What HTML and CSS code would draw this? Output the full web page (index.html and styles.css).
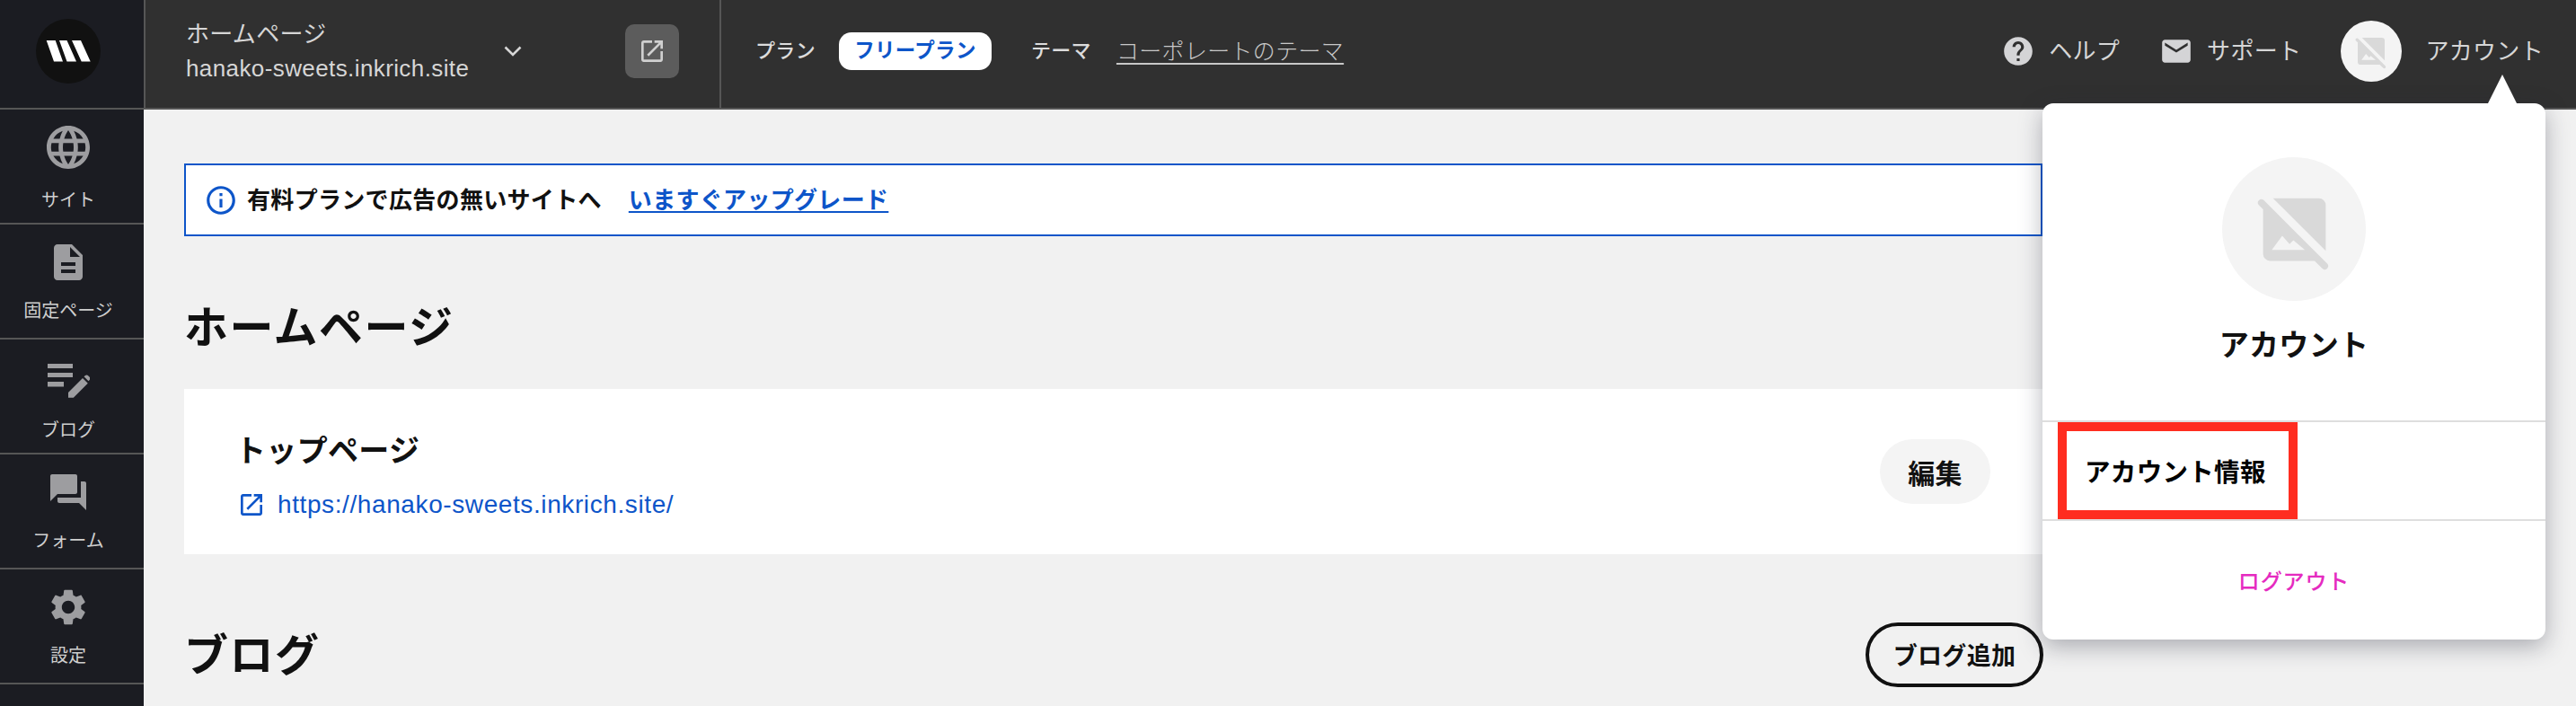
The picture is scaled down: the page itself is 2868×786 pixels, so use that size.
FILE: index.html
```html
<!DOCTYPE html>
<html lang="ja">
<head>
<meta charset="utf-8">
<title>ホームページ</title>
<link rel="stylesheet" href="styles.css">
</head>
<body>
<div class="app">
  <div class="brand">
    <span class="logo">
      <svg viewBox="0 0 72 72" width="72" height="72"><path class="logo-w" d="M11.700 24h10L30 47.500H20zM26 24h8.500L45 47.500H34.500zM40 24h10l10.700 23.500h-10z"/></svg>
    </span>
  </div>
  <header class="topbar">
    <div class="site-block">
      <div class="site-names">
        <div class="site-title">ホームページ</div>
        <div class="site-url">hanako-sweets.inkrich.site</div>
      </div>
      <svg class="chevron" viewBox="0 0 20 12" width="20" height="12"><path d="M1.500 1.500 10 10l8.500-8.500"/></svg>
      <span class="open-btn">
        <svg viewBox="0 0 24 24" width="32" height="32"><path d="M19 19H5V5h7V3H5c-1.110 0-2 .9-2 2v14c0 1.100.89 2 2 2h14c1.100 0 2-.9 2-2v-7h-2v7zM14 3v2h3.590l-9.830 9.830 1.410 1.410L19 6.410V10h2V3h-7z"/></svg>
      </span>
    </div>
    <div class="plan-block">
      <span class="plan-label">プラン</span>
      <span class="plan-pill">フリープラン</span>
      <span class="plan-label theme-label">テーマ</span>
      <a class="theme-link">コーポレートのテーマ</a>
    </div>
    <div class="top-actions">
      <span class="top-action">
        <svg viewBox="0 0 24 24" width="38" height="38"><path d="M12 2C6.480 2 2 6.480 2 12s4.480 10 10 10 10-4.480 10-10S17.520 2 12 2zm1 17h-2v-2h2v2zm2.070-7.750l-.9.920C13.450 12.900 13 13.500 13 15h-2v-.5c0-1.100.45-2.100 1.170-2.830l1.240-1.260c.37-.36.59-.86.59-1.410 0-1.100-.9-2-2-2s-2 .9-2 2H8c0-2.210 1.790-4 4-4s4 1.790 4 4c0 .88-.36 1.680-.93 2.250z"/></svg>
        ヘルプ
      </span>
      <span class="top-action">
        <svg viewBox="0 0 24 24" width="38" height="38"><path d="M20 4H4c-1.100 0-1.990.9-1.990 2L2 18c0 1.100.9 2 2 2h16c1.100 0 2-.9 2-2V6c0-1.100-.9-2-2-2zm0 4l-8 5-8-5V6l8 5 8-5v2z"/></svg>
        サポート
      </span>
      <span class="top-account">
        <span class="avatar avatar-small">
          <svg viewBox="0 0 24 24" width="40" height="40"><path fill-rule="evenodd" d="M21 18.150 5.850 3H19a2 2 0 0 1 2 2zM19.100 22.300 17.800 21H5a2 2 0 0 1-2-2V6.200L1.700 4.900a1 1 0 0 1 1.400-1.400l18.400 18.400a1 1 0 0 1-1.400 1.400zM5.500 17.900h9.500l-3.300-2.800-1.100 1.100-2.100-2.400z"/></svg>
        </span>
        アカウント
      </span>
    </div>
  </header>
  <nav class="side">
    <a class="side-item">
      <svg viewBox="2 2 20 20" width="48" height="48"><path d="M11.990 2C6.470 2 2 6.480 2 12s4.470 10 9.990 10C17.520 22 22 17.520 22 12S17.520 2 11.990 2zm6.930 6h-2.950c-.32-1.250-.78-2.450-1.380-3.560 1.840.63 3.370 1.910 4.330 3.560zM12 4.040c.83 1.200 1.480 2.530 1.910 3.960h-3.820c.43-1.430 1.080-2.760 1.910-3.960zM4.260 14C4.100 13.360 4 12.690 4 12s.1-1.360.26-2h3.380c-.08.66-.14 1.320-.14 2 0 .68.06 1.340.14 2H4.260zm.82 2h2.950c.32 1.250.78 2.450 1.380 3.560-1.840-.63-3.370-1.900-4.330-3.560zm2.950-8H5.080c.96-1.660 2.490-2.930 4.330-3.560C8.810 5.550 8.350 6.750 8.030 8zM12 19.960c-.83-1.200-1.480-2.530-1.910-3.960h3.820c-.43 1.430-1.080 2.760-1.910 3.960zM14.340 14H9.660c-.09-.66-.16-1.320-.16-2 0-.68.07-1.350.16-2h4.680c.09.65.16 1.320.16 2 0 .68-.07 1.340-.16 2zm.25 5.560c.6-1.110 1.060-2.310 1.380-3.560h2.950c-.96 1.650-2.490 2.930-4.330 3.560zM16.360 14c.08-.66.14-1.320.14-2 0-.68-.06-1.340-.14-2h3.380c.16.64.26 1.310.26 2s-.1 1.360-.26 2h-3.380z"/></svg>
      <span class="side-label side-label-low">サイト</span>
    </a>
    <a class="side-item">
      <svg viewBox="0 0 24 24" width="48" height="48"><path d="M14 2H6c-1.100 0-1.990.9-1.990 2L4 20c0 1.100.89 2 1.990 2H18c1.100 0 2-.9 2-2V8l-6-6zm2 16H8v-2h8v2zm0-4H8v-2h8v2zm-3-5V3.500L18.500 9H13z"/></svg>
      <span class="side-label">固定ページ</span>
    </a>
    <a class="side-item">
      <svg viewBox="0 0 48 48" width="48" height="48"><path d="M1 9h28v5H1zM1 19h28v5H1zM1 29h18v5.500H1zM24 46.700V41l16-16 5.800 5.800-16 15.900zM41.500 23.300l1.500-1.300c1-.8 2-.8 2.900 0l2 2c.8.9.8 1.900 0 2.800l-1.400 1.400z"/></svg>
      <span class="side-label side-label-low">ブログ</span>
    </a>
    <a class="side-item">
      <svg viewBox="0 0 24 24" width="48" height="48"><path d="M21 6h-2v9H6v2c0 .55.45 1 1 1h11l4 4V7c0-.55-.45-1-1-1zm-4 6V3c0-.55-.45-1-1-1H3c-.55 0-1 .45-1 1v14l4-4h10c.55 0 1-.45 1-1z"/></svg>
      <span class="side-label">フォーム</span>
    </a>
    <a class="side-item">
      <svg viewBox="0 0 24 24" width="48" height="48"><path d="M19.140 12.940c.04-.3.06-.61.06-.94 0-.32-.02-.64-.07-.94l2.030-1.580c.18-.14.23-.41.12-.61l-1.920-3.320c-.12-.22-.37-.29-.59-.22l-2.390.96c-.5-.38-1.030-.7-1.620-.94l-.36-2.540c-.04-.24-.24-.41-.48-.41h-3.840c-.24 0-.43.17-.47.41l-.36 2.540c-.59.24-1.130.57-1.620.94l-2.390-.96c-.22-.08-.47 0-.59.22L2.740 8.870c-.12.21-.08.47.12.61l2.030 1.580c-.05.3-.09.63-.09.94s.02.64.07.94l-2.030 1.580c-.18.14-.23.41-.12.61l1.920 3.320c.12.22.37.29.59.22l2.390-.96c.5.38 1.030.7 1.620.94l.36 2.540c.05.24.24.41.48.41h3.840c.24 0 .44-.17.47-.41l.36-2.540c.59-.24 1.130-.56 1.620-.94l2.390.96c.22.08.47 0 .59-.22l1.920-3.320c.12-.22.07-.47-.12-.61l-2.010-1.580zM12 15.600c-1.980 0-3.600-1.620-3.600-3.600s1.620-3.600 3.600-3.600 3.600 1.620 3.600 3.600-1.620 3.600-3.600 3.600z"/></svg>
      <span class="side-label">設定</span>
    </a>
  </nav>
  <main class="main">
    <div class="notice">
      <svg viewBox="0 0 24 24" width="38" height="38"><path d="M11 7h2v2h-2zm0 4h2v6h-2zm1-9C6.480 2 2 6.480 2 12s4.480 10 10 10 10-4.480 10-10S17.520 2 12 2zm0 18c-4.410 0-8-3.590-8-8s3.590-8 8-8 8 3.590 8 8-3.590 8-8 8z"/></svg>
      <span class="notice-text">有料プランで広告の無いサイトへ</span>
      <a class="notice-link">いますぐアップグレード</a>
    </div>
    <h1 class="section-title section-first">ホームページ</h1>
    <section class="page-card">
      <div class="page-info">
        <h2 class="page-title">トップページ</h2>
        <a class="page-url">
          <svg viewBox="0 0 24 24" width="32" height="32"><path d="M19 19H5V5h7V3H5c-1.110 0-2 .9-2 2v14c0 1.100.89 2 2 2h14c1.100 0 2-.9 2-2v-7h-2v7zM14 3v2h3.590l-9.830 9.830 1.410 1.410L19 6.410V10h2V3h-7z"/></svg>
          https://hanako-sweets.inkrich.site/
        </a>
      </div>
      <span class="edit-btn">編集</span>
    </section>
    <div class="section-row">
      <h1 class="section-title section-blog">ブログ</h1>
      <span class="add-btn">ブログ追加</span>
    </div>
  </main>
  <aside class="popup">
    <div class="popup-head">
      <span class="avatar avatar-large">
        <svg viewBox="0 0 24 24" width="93" height="93"><path fill-rule="evenodd" d="M21 18.150 5.850 3H19a2 2 0 0 1 2 2zM19.100 22.300 17.800 21H5a2 2 0 0 1-2-2V6.200L1.700 4.900a1 1 0 0 1 1.400-1.400l18.400 18.400a1 1 0 0 1-1.400 1.400zM5.500 17.900h9.500l-3.300-2.800-1.100 1.100-2.100-2.400z"/></svg>
      </span>
      <div class="popup-name">アカウント</div>
    </div>
    <div class="popup-item">アカウント情報<span class="highlight"></span></div>
    <div class="popup-logout">ログアウト</div>
  </aside>
</div>
</body>
</html>
```
FILE: styles.css
```css
* { box-sizing: border-box; }
html, body { margin: 0; padding: 0; }
body {
  width: 2868px;
  height: 786px;
  overflow: hidden;
  background: #f1f1f1;
  font-family: "Liberation Sans", "Noto Sans CJK JP", sans-serif;
  letter-spacing: 0.02em;
  color: #111;
}
.app {
  position: relative;
  display: grid;
  grid-template-columns: 160px 1fr;
  grid-template-rows: 122px 1fr;
  height: 786px;
  overflow: hidden;
}
.brand {
  background: #1b1c22;
  border-bottom: 2px solid #565656;
  padding: 21px 0 0 40px;
}
.logo {
  display: block;
  width: 72px;
  height: 72px;
  border-radius: 50%;
  background: #111;
}
.logo svg { display: block; }
.logo-w { fill: #fff; }

.topbar {
  display: flex;
  align-items: stretch;
  background: #303030;
  border-bottom: 2px solid #565656;
  color: #d6d6d6;
}
.site-block {
  display: flex;
  align-items: center;
  width: 643px;
  padding: 0 0 6px 45px;
  border-left: 2px solid #565656;
  border-right: 2px solid #565656;
}
.site-names { width: 354px; }
.site-title { font-size: 26px; line-height: 36px; margin-bottom: 2px; }
.site-url { font-size: 26px; line-height: 36px; letter-spacing: 0.4px; }
.chevron { fill: none; stroke: #d6d6d6; stroke-width: 2.600; flex: none; }
.open-btn {
  display: flex;
  align-items: center;
  justify-content: center;
  width: 60px;
  height: 60px;
  margin-left: 115px;
  border-radius: 10px;
  background: #5c5c5c;
}
.open-btn svg { fill: #d0d0d0; }

.plan-block {
  display: flex;
  align-items: center;
  padding: 0 0 6px 38px;
}
.plan-label { font-size: 22px; line-height: 30px; font-weight: 500; color: #dcdcdc; }
.plan-pill {
  margin-left: 26px;
  width: 170px;
  height: 42px;
  border-radius: 14px;
  background: #fff;
  color: #0d55c9;
  font-size: 22.500px;
  line-height: 42px;
  font-weight: 700;
  text-align: center;
}
.theme-label { margin-left: 44px; }
.theme-link {
  margin-left: 28px;
  font-size: 25px;
  line-height: 34px;
  color: #c8c8c8;
  text-decoration: underline;
  text-underline-offset: 4px;
  text-decoration-thickness: 1.500px;
  font-weight: 300;
}
.top-actions {
  display: flex;
  align-items: center;
  gap: 44px;
  margin-left: auto;
  padding: 0 36px 6px 0;
  font-size: 26px;
  line-height: 36px;
}
.top-action { display: flex; align-items: center; gap: 15px; }
.top-action svg { fill: #d4d4d6; }
.top-account { display: flex; align-items: center; gap: 26px; }
.avatar {
  display: flex;
  align-items: center;
  justify-content: center;
  border-radius: 50%;
  background: #f4f4f4;
}
.avatar svg { fill: #d9d9d9; }
.avatar-small { width: 68px; height: 68px; }
.avatar-large { width: 160px; height: 160px; }

.side { background: #1b1c22; }
.side-item {
  display: flex;
  flex-direction: column;
  align-items: center;
  height: 128px;
  padding: 18px 8px 0 0;
  border-bottom: 2px solid #565656;
}
.side-item svg { fill: #9d9da0; flex: none; }
.side-label {
  margin-top: 16px;
  font-size: 20px;
  line-height: 28px;
  letter-spacing: 0;
  color: #cfcfcf;
}
.side-label-low { margin-top: 21px; }

.main { padding: 60px 594px 0 45px; }
.notice {
  display: flex;
  align-items: center;
  height: 81px;
  padding: 0 0 0 20px;
  background: #fff;
  border: 2px solid #0d55c9;
}
.notice svg { fill: #0d55c9; flex: none; }
.notice-text { margin-left: 10px; font-size: 26px; line-height: 36px; font-weight: 700; }
.notice-link {
  margin-left: 30px;
  font-size: 26px;
  line-height: 36px;
  font-weight: 700;
  color: #0d55c9;
  text-decoration: underline;
  text-underline-offset: 3px;
  text-decoration-thickness: 2px;
}
.section-title {
  margin: 0;
  font-size: 49px;
  line-height: 72px;
  font-weight: 700;
  letter-spacing: 1.500px;
  color: #111;
}
.section-first { margin-top: 66px; margin-bottom: 32px; }
.section-blog { padding-top: 2px; }
.page-card {
  display: flex;
  align-items: center;
  justify-content: space-between;
  height: 184px;
  padding: 0 58px 0 57px;
  background: #fff;
}
.page-info { padding-top: 9px; }
.page-title { margin: 0 0 19px; font-size: 34px; line-height: 46px; font-weight: 700; }
.page-url {
  display: flex;
  align-items: center;
  gap: 13px;
  margin-left: 2px;
  font-size: 28px;
  line-height: 36px;
  letter-spacing: 0.6px;
  color: #0d55c9;
}
.page-url svg { fill: #0d55c9; flex: none; }
.edit-btn {
  display: flex;
  align-items: center;
  justify-content: center;
  width: 123px;
  height: 72px;
  border-radius: 36px;
  background: #f4f4f4;
  font-size: 30px;
  font-weight: 700;
}
.section-row {
  display: flex;
  align-items: center;
  justify-content: space-between;
  margin-top: 75px;
}
.add-btn {
  display: flex;
  align-items: center;
  justify-content: center;
  width: 198px;
  height: 72px;
  margin-right: -1px;
  padding-bottom: 2px;
  border: 4px solid #111;
  border-radius: 36px;
  font-size: 27px;
  font-weight: 700;
}
.popup {
  position: absolute;
  top: 115px;
  right: 34px;
  width: 560px;
  height: 597px;
  border-radius: 12px;
  background: #fff;
  box-shadow: 0 8px 26px rgba(40, 44, 60, 0.35);
}
.popup::before {
  content: "";
  position: absolute;
  top: -32px;
  left: 496px;
  width: 32px;
  height: 32px;
  background: #fff;
  clip-path: polygon(50% 0, 100% 100%, 0 100%);
}
.popup-head {
  display: flex;
  flex-direction: column;
  align-items: center;
  height: 355px;
  padding-top: 60px;
  border-bottom: 2px solid #dedede;
}
.popup-name { margin-top: 28px; font-size: 33px; line-height: 44px; font-weight: 700; color: #111; }
.popup-item {
  position: relative;
  height: 110px;
  padding-left: 47px;
  border-bottom: 2px solid #dedede;
  font-size: 28.500px;
  line-height: 113px;
  font-weight: 700;
  color: #000;
}
.highlight {
  position: absolute;
  left: 17px;
  top: 0;
  width: 267px;
  height: 108px;
  border: 10px solid #ff2d20;
}
.popup-logout {
  margin-top: 51px;
  text-align: center;
  font-size: 24px;
  line-height: 34px;
  font-weight: 500;
  letter-spacing: 0.9px;
  color: #e52bc0;
}
```
